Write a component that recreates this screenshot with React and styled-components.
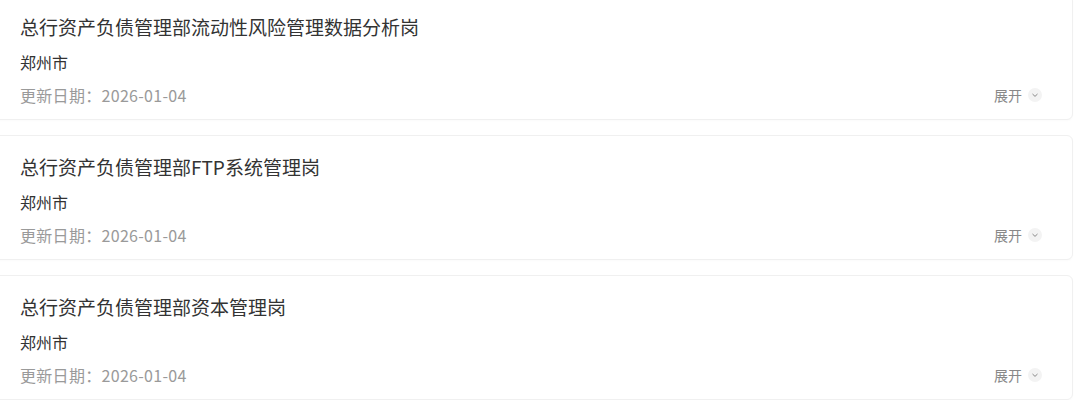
import React from 'react';
import styled, { createGlobalStyle } from 'styled-components';

const GlobalStyle = createGlobalStyle`
  html, body {
    margin: 0;
    padding: 0;
    background: #fff;
    overflow: hidden;
  }
  body {
    font-family: "Noto Sans CJK SC", "Noto Sans", sans-serif;
    -webkit-font-smoothing: antialiased;
  }
`;

const List = styled.div`
  display: flex;
  flex-direction: column;
  gap: 15px;
  margin: -5px 7px 0 -10px;
`;

const Card = styled.div`
  background: #fff;
  border: 1px solid #f0f0f0;
  border-radius: 6px;
  padding: 18px 30px 12px 29px;
  box-shadow: 0 1px 2px rgba(0, 0, 0, 0.02);
`;

const Title = styled.div`
  font-size: 19px;
  line-height: 26px;
  color: #333;
`;

const City = styled.div`
  margin-top: 10px;
  font-size: 16px;
  line-height: 24px;
  color: #333;
`;

const Footer = styled.div`
  margin-top: 9px;
  display: flex;
  align-items: center;
  justify-content: space-between;
`;

const Updated = styled.div`
  font-size: 16px;
  line-height: 24px;
  letter-spacing: 0.3px;
  color: #9a9a9a;
`;

const Toggle = styled.button`
  display: flex;
  align-items: center;
  gap: 6px;
  border: 0;
  padding: 0;
  background: none;
  font: inherit;
  font-size: 14px;
  line-height: 20px;
  color: #888;
  cursor: pointer;
`;

const Chevron = styled.span`
  width: 14px;
  height: 14px;
  border-radius: 50%;
  background: #f3f3f3;
  display: flex;
  align-items: center;
  justify-content: center;
`;

const jobs = [
  { title: '总行资产负债管理部流动性风险管理数据分析岗', city: '郑州市', date: '2026-01-04' },
  { title: '总行资产负债管理部FTP系统管理岗', city: '郑州市', date: '2026-01-04' },
  { title: '总行资产负债管理部资本管理岗', city: '郑州市', date: '2026-01-04' },
];

const JobCard = ({ title, city, date }) => (
  <Card>
    <Title>{title}</Title>
    <City>{city}</City>
    <Footer>
      <Updated>更新日期：{date}</Updated>
      <Toggle>
        展开
        <Chevron>
          <svg width="8" height="8" viewBox="0 0 8 8">
            <path d="M1.5 3 L4 5.4 L6.5 3" fill="none" stroke="#888" strokeWidth="1" />
          </svg>
        </Chevron>
      </Toggle>
    </Footer>
  </Card>
);

export default function App() {
  return (
    <>
      <GlobalStyle />
      <List>
        {jobs.map((job) => (
          <JobCard key={job.title} {...job} />
        ))}
      </List>
    </>
  );
}
